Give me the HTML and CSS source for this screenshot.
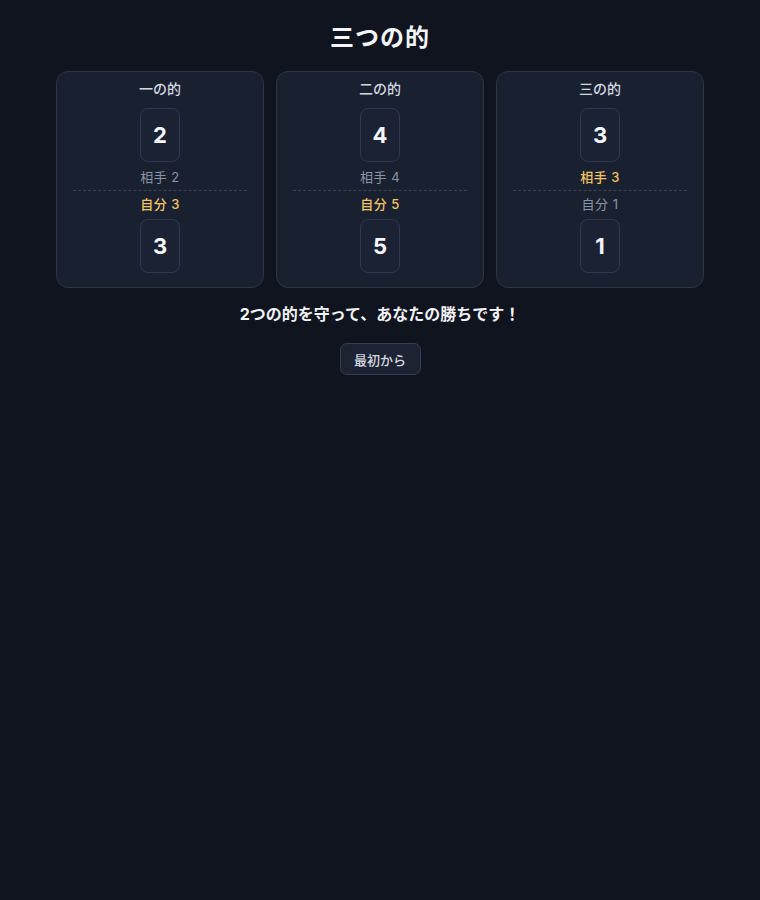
FILE: index.html
```html
<!DOCTYPE html>
<html lang="ja">
<head>
<meta charset="utf-8">
<title>三つの的</title>
<link rel="stylesheet" href="styles.css">
</head>
<body>
<main class="page">
  <h1 class="title">三つの的</h1>
  <div class="targets">
    <section class="card">
      <div class="card-label">一の的</div>
      <div class="num">2</div>
      <div class="side">相手 2</div>
      <div class="divider"></div>
      <div class="side win">自分 3</div>
      <div class="num">3</div>
    </section>
    <section class="card">
      <div class="card-label">二の的</div>
      <div class="num">4</div>
      <div class="side">相手 4</div>
      <div class="divider"></div>
      <div class="side win">自分 5</div>
      <div class="num">5</div>
    </section>
    <section class="card">
      <div class="card-label">三の的</div>
      <div class="num">3</div>
      <div class="side win">相手 3</div>
      <div class="divider"></div>
      <div class="side">自分 1</div>
      <div class="num">1</div>
    </section>
  </div>
  <p class="message">2つの的を守って、あなたの勝ちです！</p>
  <button class="restart">最初から</button>
</main>
</body>
</html>
```
FILE: styles.css
```css
html, body {
  margin: 0;
  padding: 0;
  background: #10141e;
}
body {
  font-family: Inter, "Noto Sans", "Noto Sans CJK JP", sans-serif;
  color: #e6e9ef;
}
.page {
  width: 648px;
  margin: 0 auto;
  display: flex;
  flex-direction: column;
  align-items: center;
}
.title {
  margin: 23px 0 18px;
  font-size: 24px;
  line-height: 30px;
  font-weight: 700;
  color: #f3f5f8;
  letter-spacing: 1px;
}
.targets {
  width: 100%;
  display: grid;
  grid-template-columns: repeat(3, 1fr);
  gap: 12px;
}
.card {
  box-sizing: border-box;
  height: 217px;
  background: #192030;
  border: 1px solid #2d3649;
  border-radius: 12px;
  padding: 7px 16px 13px;
  display: flex;
  flex-direction: column;
  align-items: center;
}
.card-label {
  font-size: 14px;
  line-height: 20px;
  font-weight: 500;
  color: #d3d8e1;
}
.num {
  box-sizing: border-box;
  width: 40px;
  height: 54px;
  margin-top: 9px;
  border: 1px solid #2f3a50;
  border-radius: 8px;
  background: #1b2234;
  display: flex;
  align-items: center;
  justify-content: center;
  font-size: 22px;
  font-weight: 700;
  color: #f4f6fa;
}
.side {
  margin-top: 6px;
  font-size: 13px;
  line-height: 18px;
  color: #8b94a6;
  letter-spacing: 0.5px;
}
.side.win {
  color: #f2c462;
  font-weight: 500;
}
.divider {
  align-self: stretch;
  margin-top: 4px;
  border-top: 1px dashed #3a4457;
}
.divider + .side {
  margin-top: 4px;
}
.side + .num {
  margin-top: 6px;
}
.message {
  margin: 14px 0 0;
  font-size: 16px;
  line-height: 24px;
  font-weight: 700;
  color: #f1f3f7;
}
.restart {
  margin-top: 17px;
  width: 81px;
  height: 32px;
  border: 1px solid #343d50;
  border-radius: 7px;
  background: #1d2333;
  color: #d4d8e0;
  font-family: Inter, "Noto Sans", "Noto Sans CJK JP", sans-serif;
  font-size: 13px;
  font-weight: 500;
  cursor: pointer;
}
```
